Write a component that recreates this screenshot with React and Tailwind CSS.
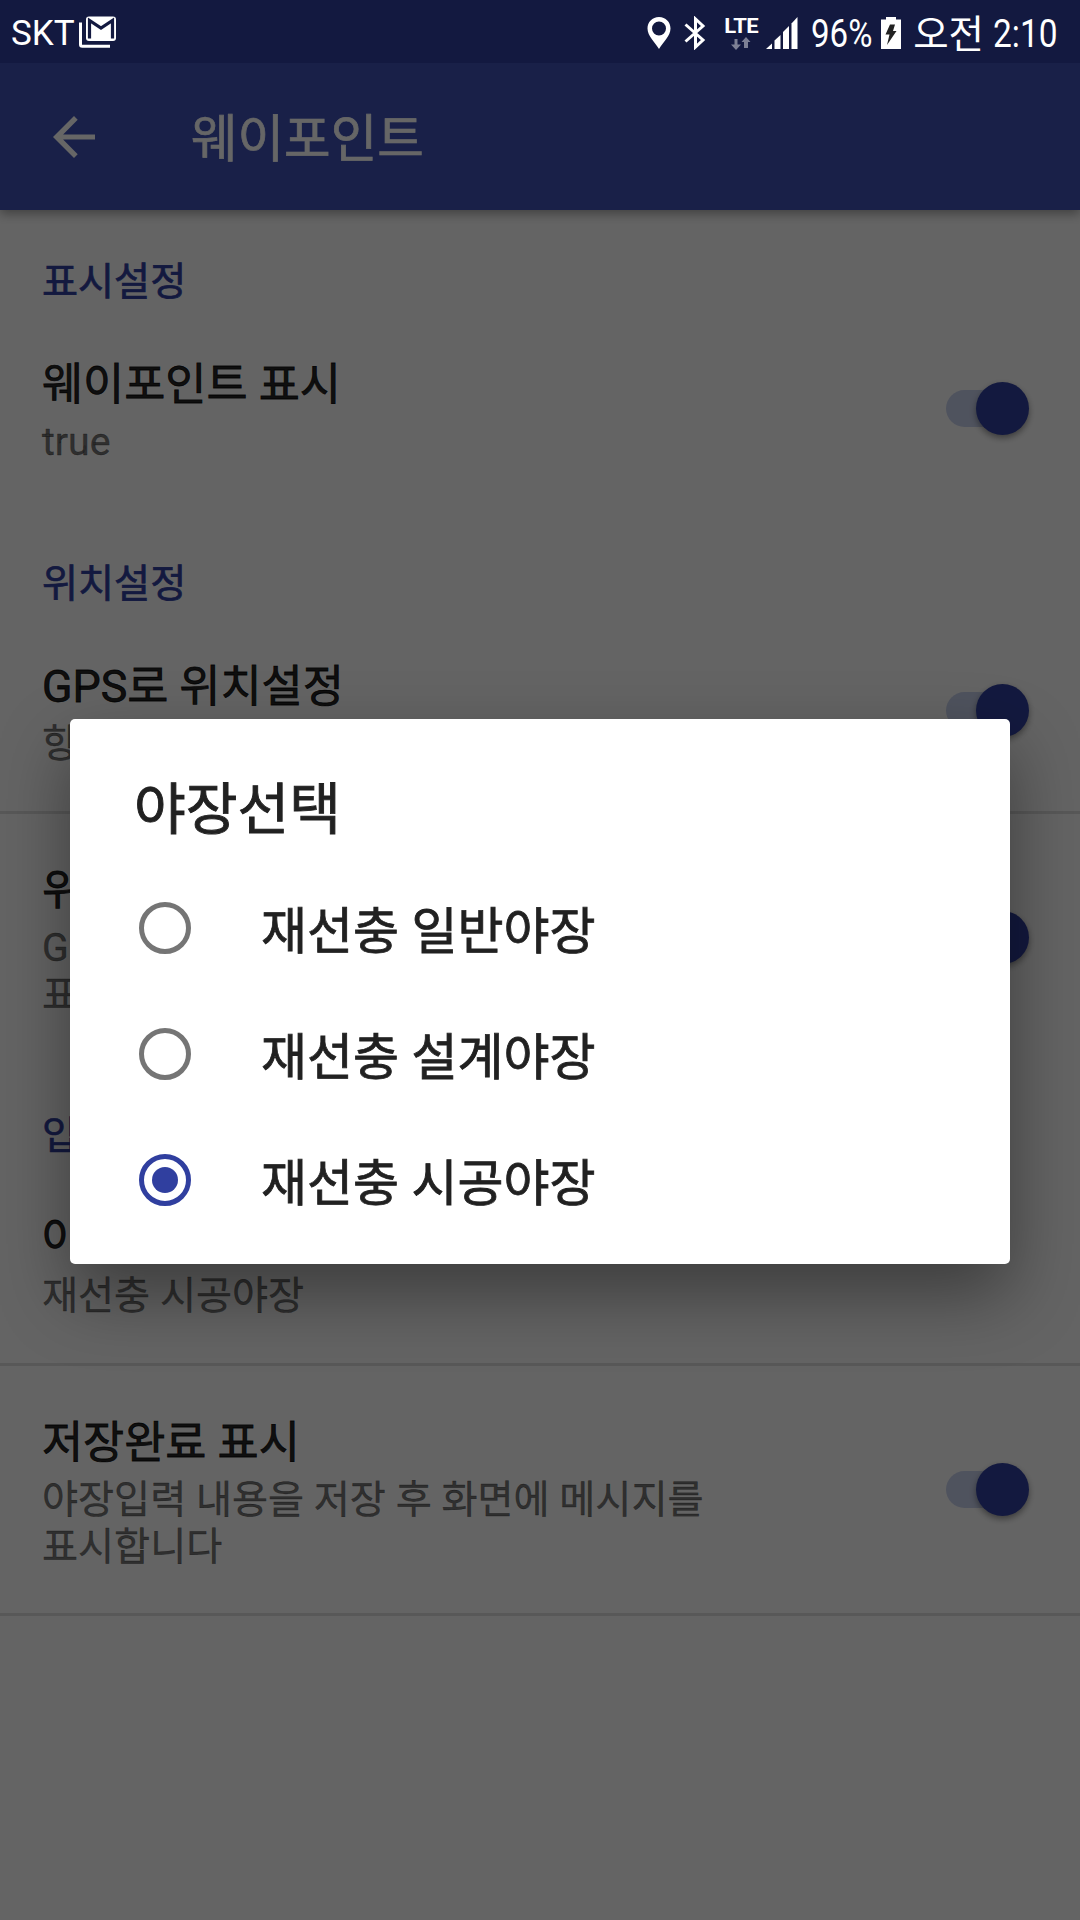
/**
 * Waypoint settings screen
 * Preference list with the field book picker opened on top
 */
import React, { useState } from 'react';

const OPTIONS = [
  { id: 'general', label: '재선충 일반야장' },
  { id: 'design', label: '재선충 설계야장' },
  { id: 'construction', label: '재선충 시공야장' },
];

const StatusBar = () => (
  <div className="relative z-20 flex h-[63px] shrink-0 items-center bg-[#131940] pl-[11px] pr-[18px] text-white">
    <span className="pt-[4px] text-[35px] leading-[59px]">SKT</span>
    <svg className="ml-[4px] h-[32px] w-[38px]" viewBox="0 0 38 32" fill="none">
      <path d="M1.5 6.5V28.5Q1.5 30.3 3.3 30.3H31" stroke="#fff" strokeWidth="3" />
      <rect x="7" y="0.5" width="30" height="24.5" rx="3" fill="#fff" />
      <path d="M10.500 22.500V4.500L22 12L33.500 4.500V22.500" stroke="#131940" strokeWidth="3.200" />
    </svg>

    <div className="ml-auto flex items-center pt-[3px]">
      {/* Location */}
      <svg className="h-[32px] w-[24px]" viewBox="0 0 24 32" fill="#fff">
        <path fillRule="evenodd" d="M12 0C5.2 0 .5 5.200.5 11.500C.5 19 8 25 12 32C16 25 23.500 19 23.500 11.500C23.500 5.200 18.800 0 12 0ZM12 4.500a7 7 0 1 1 0 14a7 7 0 0 1 0-14Z" />
      </svg>
      {/* Bluetooth */}
      <svg className="ml-[13px] h-[34px] w-[22px]" viewBox="0 0 22 34" fill="none" stroke="#fff" strokeWidth="3">
        <path d="M1.500 8.500L19 24L11.500 31V3L19 10L1.500 25.500" />
      </svg>
      {/* LTE */}
      <div className="ml-[18px] flex w-[34px] flex-col items-center">
        <span className="scale-x-[1.05] text-[21px] font-bold leading-[18px] tracking-[-0.5px]">LTE</span>
        <svg className="mt-[2px] h-[13px] w-[20px]" viewBox="0 0 20 13" fill="#7d8095">
          <path d="M3.500 2h3v5.500H10L5 13L0 7.500h3.500z" />
          <path d="M15 0l4.500 5H17v6h-4V5h-2.500z" />
        </svg>
      </div>
      {/* Signal */}
      <svg className="ml-[8px] h-[32px] w-[32px]" viewBox="0 0 32 32" fill="#fff">
        <path d="M0 32L6 26.500V32z" />
        <path d="M8.500 23.500L14.500 18V32H8.500z" />
        <path d="M17 15L23 9V32H17z" />
        <path d="M25.500 6.500L31.500 0V32H25.500z" />
      </svg>
      <span className="ml-[13px] w-[62px] pt-[2px] text-[38px] leading-[58px]">
        <span className="inline-block origin-left scale-x-[0.87]">96%</span>
      </span>
      {/* Battery */}
      <svg className="ml-[8px] h-[32px] w-[20px]" viewBox="0 0 20 32">
        <path d="M5 0h10v2.500h5V32H0V2.500h5z" fill="#fff" />
        <path d="M9 7.500h5L12 14h3.500L6 28L8.500 17.500H4.500z" fill="#222" />
      </svg>
      <span className="ml-[12px] pt-[4px] text-[38.5px] leading-[56px]">오전</span>
      <span className="ml-[9px] w-[69px] pt-[2px] text-[38px] leading-[58px]">
        <span className="inline-block origin-left scale-x-[0.88]">2:10</span>
      </span>
    </div>
  </div>
);

const Toolbar = () => (
  <header className="relative z-10 flex h-[147px] shrink-0 items-center bg-[#3f51b5] pl-[53px] text-white shadow-[0_4px_10px_rgba(0,0,0,0.35)]">
    <svg className="h-[42px] w-[42px]" viewBox="0 0 42 42" fill="#fff">
      <path d="M42 18.400H10.100L24.700 3.700L21 0L0 21L21 42L24.700 38.300L10.100 23.600H42z" />
    </svg>
    <h1 className="ml-[96px] pt-[6px] text-[50.6px] leading-[60px] [-webkit-text-stroke:0.7px]">웨이포인트</h1>
  </header>
);

const Switch = () => (
  <div className="flex w-[83px] items-center">
    <div className="h-[37px] w-[65px] rounded-full bg-[#c6cfea]" />
    <div className="-ml-[35px] h-[53px] w-[53px] shrink-0 rounded-full bg-[#303f9f] shadow-[0_3px_6px_rgba(0,0,0,0.4)]" />
  </div>
);

const Category = ({ children }) => (
  <h2 className="h-[94px] pl-[42px] pt-[43px] text-[39.2px] leading-[58px] text-[#303f9f] [-webkit-text-stroke:0.7px]">
    {children}
  </h2>
);

const Preference = ({ title, summary, hasSwitch, divider }) => (
  <div
    className={`flex items-center justify-between border-b-[3px] pl-[42px] pr-[51px] ${
      divider ? 'border-black/12' : 'border-transparent'
    } ${summary.length > 1 ? 'h-[250px]' : 'h-[208px] pt-[3px]'}`}
  >
    <div className="pt-[4px]">
      <p className="mb-[2px] text-[44.7px] leading-[63px] text-black/87 [-webkit-text-stroke:0.8px]">{title}</p>
      {summary.map((line) => (
        <p key={line} className="text-[39.2px] leading-[47px] text-black/54 [-webkit-text-stroke:0.4px]">
          {line}
        </p>
      ))}
    </div>
    {hasSwitch && <Switch />}
  </div>
);

const Radio = ({ checked }) => (
  <span
    className={`flex h-[52px] w-[52px] items-center justify-center rounded-full border-[5px] ${
      checked ? 'border-[#303f9f]' : 'border-[#757575]'
    }`}
  >
    {checked && <span className="h-[26px] w-[26px] rounded-full bg-[#303f9f]" />}
  </span>
);

const FieldBookDialog = ({ selected, onSelect }) => (
  <div className="absolute inset-x-0 bottom-0 top-[63px] z-10 flex items-center justify-center bg-black/60">
    <div className="h-[545px] w-[940px] rounded-[5px] bg-white shadow-[0_30px_70px_rgba(0,0,0,0.4)]">
      <h2 className="h-[146px] pl-[64px] pt-[56px] text-[56.25px] leading-[70px] text-[#212121] [-webkit-text-stroke:0.9px]">
        야장선택
      </h2>
      {OPTIONS.map((option) => (
        <button
          key={option.id}
          onClick={() => onSelect(option.id)}
          className="flex h-[126px] w-full items-center pl-[69px] text-left"
        >
          <Radio checked={option.id === selected} />
          <span className="ml-[70px] pt-[7px] text-[50px] leading-[60px] text-[#212121] [-webkit-text-stroke:0.8px]">
            {option.label}
          </span>
        </button>
      ))}
    </div>
  </div>
);

const App = () => {
  const [selected, setSelected] = useState('construction');

  return (
    <div className="relative flex h-[1920px] w-[1080px] flex-col overflow-hidden bg-[#fafafa] font-[Roboto,'Noto_Sans_CJK_KR',sans-serif]">
      <StatusBar />
      <Toolbar />
      <main>
        <Category>표시설정</Category>
        <Preference title="웨이포인트 표시" summary={['true']} hasSwitch />
        <Category>위치설정</Category>
        <Preference title="GPS로 위치설정" summary={['항상']} hasSwitch divider />
        <Preference title="위치 표시" summary={['GPS 위치', '표시합니다']} hasSwitch />
        <Category>입력설정</Category>
        <Preference title="야장선택" summary={['재선충 시공야장']} divider />
        <Preference
          title="저장완료 표시"
          summary={['야장입력 내용을 저장 후 화면에 메시지를', '표시합니다']}
          hasSwitch
          divider
        />
      </main>
      <FieldBookDialog selected={selected} onSelect={setSelected} />
    </div>
  );
};

export default App;
